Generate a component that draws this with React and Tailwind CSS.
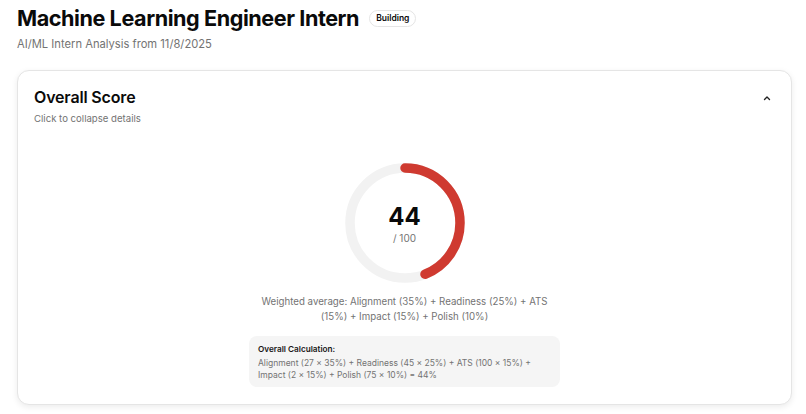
import React from "react";

function ScoreRing({ value }) {
  const r = 55;
  const c = 2 * Math.PI * r;
  const dash = (value / 100) * c;
  return (
    <div className="relative w-[120px] h-[120px]">
      <svg width="120" height="120" viewBox="0 0 120 120" className="-rotate-90">
        <circle cx="60" cy="60" r={r} fill="none" stroke="#f2f2f2" strokeWidth="9.5" />
        <circle
          cx="60"
          cy="60"
          r={r}
          fill="none"
          stroke="#cf3a30"
          strokeWidth="9.5"
          strokeLinecap="round"
          strokeDasharray={`${dash} ${c}`}
        />
      </svg>
      <div className="absolute inset-0 flex flex-col items-center justify-center pt-[2px]">
        <span className="text-[24px] font-bold leading-none text-neutral-950">44</span>
        <span className="text-[10px] text-neutral-500 mt-[3px] leading-[12px]">/ 100</span>
      </div>
    </div>
  );
}

export default function App() {
  return (
    <div className="min-h-[414px] bg-white pl-[17px] pr-[14px] pt-[4px] font-['Inter',sans-serif] text-neutral-950">
      <div className="flex items-center gap-[10px]">
        <h1 className="text-[21.6px] font-bold tracking-[-0.02em] leading-[28px]">Machine Learning Engineer Intern</h1>
        <span className="rounded-full border border-neutral-200 px-[6px] py-[2px] text-[8.5px] font-semibold leading-[11px]">Building</span>
      </div>
      <p className="mt-[4px] text-[11.2px] text-neutral-500 leading-[16px]">AI/ML Intern Analysis from 11/8/2025</p>

      <div className="mt-[18px] rounded-xl border border-neutral-200 bg-white shadow-[0_2px_6px_rgba(0,0,0,0.08)]">
        <div className="flex items-start justify-between px-[16px] pt-[14px]">
          <div>
            <h2 className="text-[16px] font-semibold leading-[24px] tracking-[-0.01em]">Overall Score</h2>
            <p className="mt-[4px] text-[9.6px] text-neutral-500 leading-[12px]">Click to collapse details</p>
          </div>
          <svg width="12" height="12" viewBox="0 0 24 24" fill="none" stroke="#222" strokeWidth="2.8" strokeLinecap="round" strokeLinejoin="round" className="mr-[2px] mt-[7px]">
            <path d="M7 15l5-5 5 5" />
          </svg>
        </div>
        <div className="flex flex-col items-center pt-[38px] pb-[17px]">
          <ScoreRing value={44} />
          <p className="mt-[11px] max-w-[300px] text-center text-[9.7px] leading-[15px] text-neutral-500">
            Weighted average: Alignment (35%) + Readiness (25%) + ATS (15%) + Impact (15%) + Polish (10%)
          </p>
          <div className="mt-[12px] w-[311px] rounded-lg bg-neutral-100 px-[9px] pt-[7px] pb-[6px]">
            <p className="text-[8.2px] font-semibold leading-[12px] text-neutral-900">Overall Calculation:</p>
            <p className="mt-[2px] text-[8.5px] leading-[12px] text-neutral-500">
              Alignment (27 × 35%) + Readiness (45 × 25%) + ATS (100 × 15%) + Impact (2 × 15%) + Polish (75 × 10%) = 44%
            </p>
          </div>
        </div>
      </div>
    </div>
  );
}
